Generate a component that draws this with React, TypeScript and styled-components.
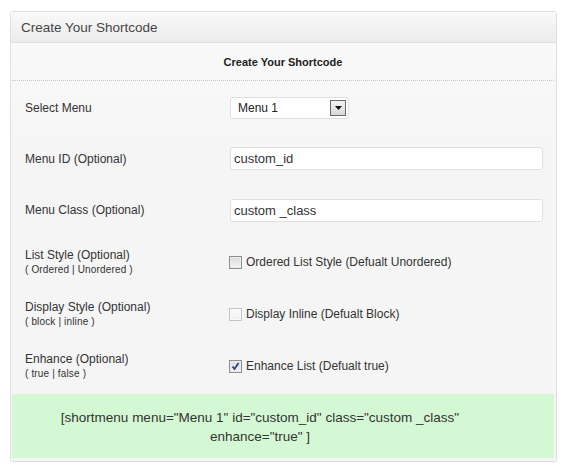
import React from 'react';
import styled, { createGlobalStyle } from 'styled-components';

const GlobalStyle = createGlobalStyle`
  body {
    margin: 0;
    background: #ffffff;
    font-family: 'Liberation Sans', Arial, sans-serif;
    color: #333;
  }
`;

const Panel = styled.div`
  margin: 11px 10px 0;
  width: 545px;
  border: 1px solid #dfdfdf;
  border-radius: 3px;
  background: #f6f6f6;
  box-shadow: 0 1px 1px rgba(0, 0, 0, 0.06);
`;

const PanelHeader = styled.div`
  height: 30px;
  display: flex;
  align-items: center;
  padding-left: 10px;
  background: linear-gradient(to bottom, #f9f9f9, #ececec);
  border-bottom: 1px solid #dfdfdf;
  font-size: 13.5px;
  color: #464646;
`;

const Body = styled.div`
  padding: 0 2px 3px 1px;
  background: linear-gradient(to bottom, #f9f9f9, #f5f5f5 120px);
`;

const Title = styled.div`
  height: 37px;
  display: flex;
  align-items: center;
  justify-content: center;
  font-size: 11px;
  font-weight: bold;
  color: #222;
  border-bottom: 1px dotted #c8c8c8;
`;

const Rows = styled.div`
  padding-top: 1px;
  padding-bottom: 2px;
`;

const Row = styled.div<{ $height: number }>`
  display: grid;
  grid-template-columns: 205px 1fr;
  align-items: center;
  height: ${(p) => p.$height}px;
  padding: 0 11px 0 13px;
`;

const LabelCell = styled.div`
  display: flex;
  flex-direction: column;
  gap: 2px;
`;

const Label = styled.span`
  font-size: 12px;
  color: #333;
  line-height: 14px;
`;

const Hint = styled.span`
  font-size: 10px;
  color: #333;
  line-height: 12px;
  letter-spacing: 0.15px;
`;

const TextInput = styled.div`
  height: 21px;
  border: 1px solid #dfdfdf;
  border-radius: 3px;
  background: #fff;
  display: flex;
  align-items: center;
  padding-left: 3px;
  font-size: 13px;
  color: #333;
`;

const Select = styled.div`
  width: 119px;
  height: 22px;
  border: 1px solid #dfdfdf;
  border-radius: 3px;
  background: #fff;
  display: flex;
  align-items: center;
  justify-content: space-between;
  padding: 0 2px 0 7px;
  font-size: 12px;
  color: #222;
  box-sizing: border-box;
`;

const SelectArrow = styled.span`
  width: 14px;
  height: 14px;
  border: 1px solid #6a6a6a;
  background: linear-gradient(to bottom, #f4f4f4, #d8d8d8);
  display: flex;
  align-items: center;
  justify-content: center;
`;

const CheckLine = styled.label`
  display: flex;
  align-items: center;
  gap: 4px;
  font-size: 12px;
  color: #333;
  margin-left: -1px;
`;

const Box = styled.span<{ $muted?: boolean }>`
  width: 11px;
  height: 11px;
  border: 1px solid ${(p) => (p.$muted ? '#c4c4c4' : '#8e8e8e')};
  background: ${(p) =>
    p.$muted ? 'linear-gradient(to bottom, #fafafa, #f0f0f0)' : 'linear-gradient(to bottom, #dcdcdc, #f2f2f2)'};
  box-shadow: inset 0 0 0 1px ${(p) => (p.$muted ? '#f8f8f8' : '#ededed')};
  display: flex;
  align-items: center;
  justify-content: center;
`;

const Output = styled.div`
  height: 64px;
  background: #d4f8d4;
  display: flex;
  align-items: center;
  justify-content: center;
  text-align: center;
  font-size: 13.5px;
  line-height: 19px;
  color: #333;
  padding: 2px 88px 0 42px;
  box-sizing: border-box;
`;

type Check = { label: string; hint: string; text: string; checked?: boolean; muted?: boolean };

const checks: Check[] = [
  { label: 'List Style (Optional)', hint: '( Ordered | Unordered )', text: 'Ordered List Style (Defualt Unordered)' },
  { label: 'Display Style (Optional)', hint: '( block | inline )', text: 'Display Inline (Defualt Block)', muted: true },
  { label: 'Enhance (Optional)', hint: '( true | false )', text: 'Enhance List (Defualt true)', checked: true },
];

const App = () => {
  return (
    <>
      <GlobalStyle />
      <Panel>
        <PanelHeader>Create Your Shortcode</PanelHeader>
        <Body>
          <Title>Create Your Shortcode</Title>
          <Rows>
            <Row $height={51}>
              <LabelCell>
                <Label>Select Menu</Label>
              </LabelCell>
              <Select>
                <span>Menu 1</span>
                <SelectArrow>
                  <svg width="7" height="4" viewBox="0 0 7 4">
                    <path d="M0 0h7L3.5 4z" fill="#111" />
                  </svg>
                </SelectArrow>
              </Select>
            </Row>
            <Row $height={51}>
              <LabelCell>
                <Label>Menu ID (Optional)</Label>
              </LabelCell>
              <TextInput>custom_id</TextInput>
            </Row>
            <Row $height={52}>
              <LabelCell>
                <Label>Menu Class (Optional)</Label>
              </LabelCell>
              <TextInput>custom _class</TextInput>
            </Row>
            {checks.map((c) => (
              <Row $height={52} key={c.label}>
                <LabelCell>
                  <Label>{c.label}</Label>
                  <Hint>{c.hint}</Hint>
                </LabelCell>
                <CheckLine>
                  <Box $muted={c.muted}>
                    {c.checked && (
                      <svg width="9" height="9" viewBox="0 0 9 9">
                        <path d="M1.5 4.5L3.5 7L7.5 1" fill="none" stroke="#2b3f8f" strokeWidth="1.8" />
                      </svg>
                    )}
                  </Box>
                  {c.text}
                </CheckLine>
              </Row>
            ))}
          </Rows>
          <Output>
            [shortmenu menu="Menu 1" id="custom_id" class="custom _class" enhance="true" ]
          </Output>
        </Body>
      </Panel>
    </>
  );
};

export default App;
